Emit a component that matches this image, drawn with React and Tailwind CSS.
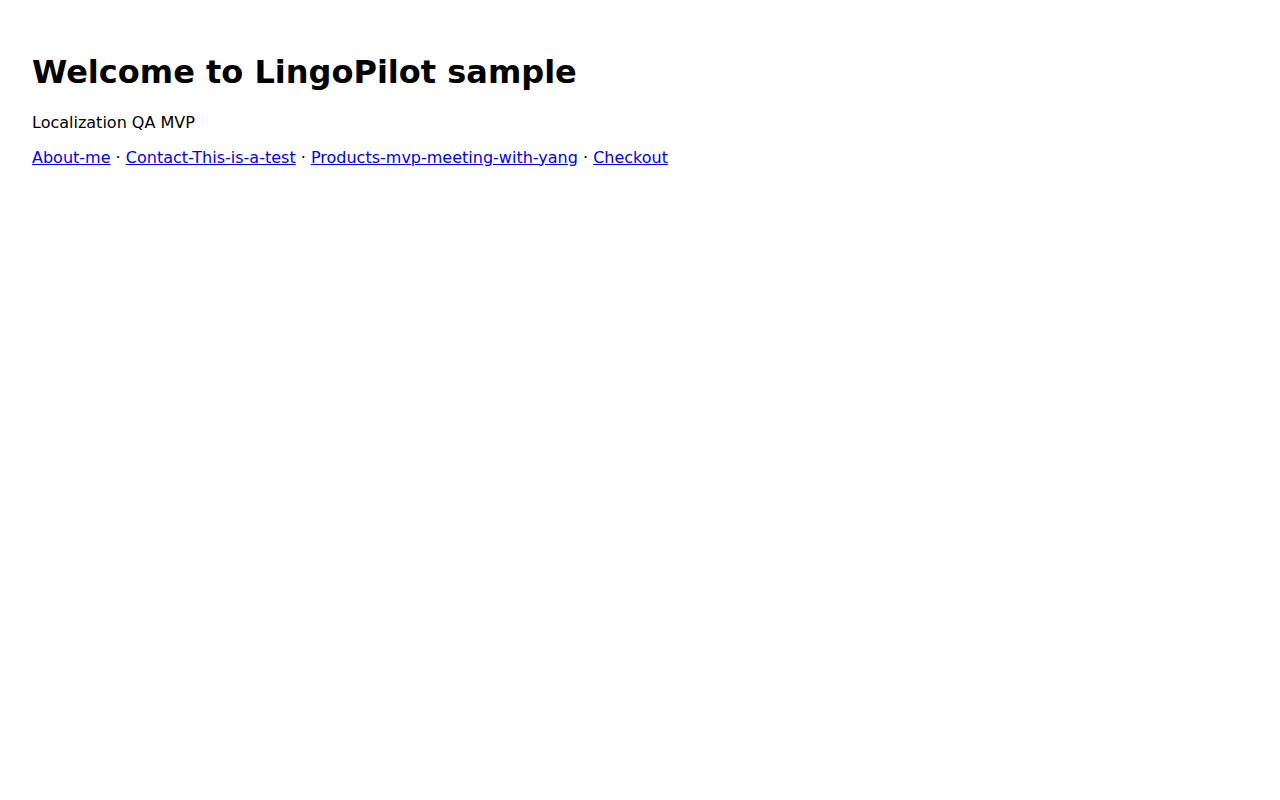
export default function App() {
  const links = ["About-me", "Contact-This-is-a-test", "Products-mvp-meeting-with-yang", "Checkout"];
  return (
    <div className="p-8 bg-white text-black min-h-screen" style={{ fontFamily: '"DejaVu Sans", sans-serif' }}>
      <h1 className="text-[32px] font-bold leading-[normal] my-[21.44px]">Welcome to LingoPilot sample</h1>
      <p className="text-base leading-[normal] my-4">Localization QA MVP</p>
      <p className="text-base leading-[normal] my-4">
        {links.map((l, i) => (
          <span key={l}>
            {i > 0 && " · "}
            <a href="#" className="text-[#0000ee] underline">{l}</a>
          </span>
        ))}
      </p>
    </div>
  );
}
